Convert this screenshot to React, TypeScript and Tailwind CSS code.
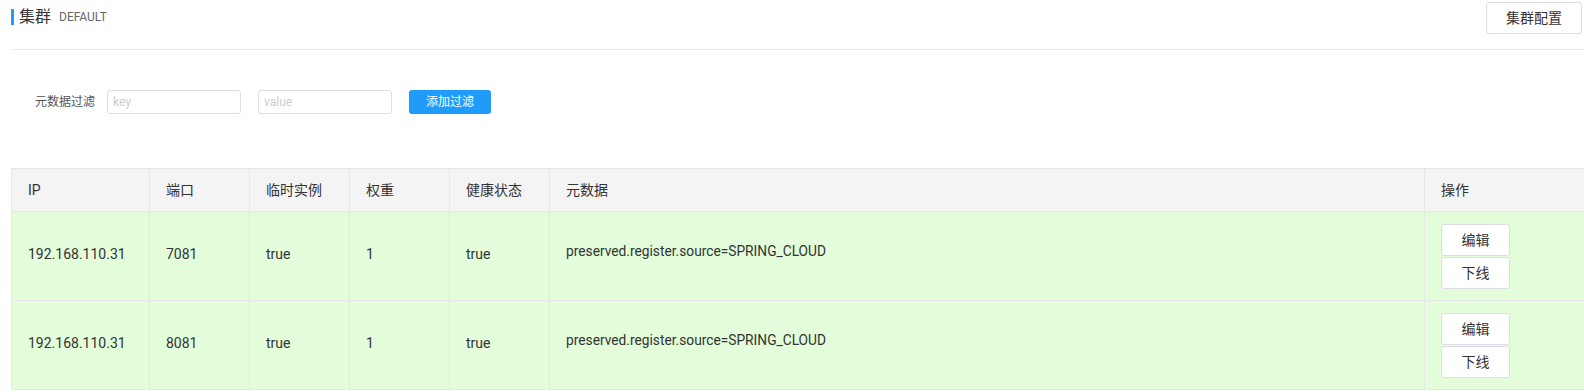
const rows = [
  { ip: '192.168.110.31', port: '7081', ephemeral: 'true', weight: '1', healthy: 'true', meta: 'preserved.register.source=SPRING_CLOUD' },
  { ip: '192.168.110.31', port: '8081', ephemeral: 'true', weight: '1', healthy: 'true', meta: 'preserved.register.source=SPRING_CLOUD' },
]

const headers = ['IP', '端口', '临时实例', '权重', '健康状态', '元数据', '操作']

const grid = 'grid grid-cols-[138px_100px_100px_100px_100px_875px_160px]'

export default function App() {
  return (
    <div className="w-[1584px] h-[392px] overflow-hidden bg-white text-[#333] font-['Roboto','Noto_Sans_CJK_SC',sans-serif]">
      <div className="pl-[11px]">
        {/* title */}
        <div className="flex items-start justify-between h-[50px] border-b border-[#ebebeb]">
          <div className="flex items-center h-4 mt-[9px]">
            <span className="w-[3px] h-4 bg-[#209bfa]" />
            <span className="ml-[5px] text-base leading-4 text-[#333]">集群</span>
            <span className="ml-2 text-xs leading-4 text-[#666]">DEFAULT</span>
          </div>
          <button className="mt-[2px] mr-[2px] w-[96px] h-[32px] bg-white border border-[#dcdee3] rounded-[3px] text-sm text-[#333]">
            集群配置
          </button>
        </div>

        {/* filter */}
        <div className="flex items-center h-6 mt-10 pl-6">
          <span className="text-xs text-[#555] w-[72px]">元数据过滤</span>
          <input
            className="w-[134px] h-6 border border-[#dcdee3] rounded-[3px] px-[5px] text-xs outline-none placeholder:text-[#ccc]"
            placeholder="key"
          />
          <input
            className="ml-[17px] w-[134px] h-6 border border-[#dcdee3] rounded-[3px] px-[5px] text-xs outline-none placeholder:text-[#ccc]"
            placeholder="value"
          />
          <button className="ml-[17px] w-[82px] h-6 bg-[#209bfa] rounded-[3px] text-xs text-white">
            添加过滤
          </button>
        </div>

        {/* table */}
        <div className="mt-[54px] border-t border-[#e6e6e6] text-sm">
          <div className={`${grid} bg-[#f4f4f4]`}>
            {headers.map(h => (
              <div key={h} className="h-[43px] flex items-center pl-4 border-l border-b border-[#e6e6e6]">
                {h}
              </div>
            ))}
          </div>
          {rows.map((r, i) => (
            <div key={i} className={`${grid} bg-[#e3fcda]`}>
              {[r.ip, r.port, r.ephemeral, r.weight, r.healthy].map((v, j) => (
                <div key={j} className="h-[89px] flex items-center pl-4 pb-[4px] border-l border-b border-[#e6e6e6]">
                  {v}
                </div>
              ))}
              <div className="h-[89px] pl-4 pt-[29px] leading-5 text-[13.75px] border-l border-b border-[#e6e6e6]">{r.meta}</div>
              <div className="h-[89px] pl-4 pt-3 flex flex-col gap-px border-l border-b border-[#e6e6e6]">
                <button className="w-[69px] h-8 bg-white border border-[#dcdee3] rounded-[3px] text-sm text-[#333]">编辑</button>
                <button className="w-[69px] h-8 bg-white border border-[#dcdee3] rounded-[3px] text-sm text-[#333]">下线</button>
              </div>
            </div>
          ))}
        </div>
      </div>
    </div>
  )
}
